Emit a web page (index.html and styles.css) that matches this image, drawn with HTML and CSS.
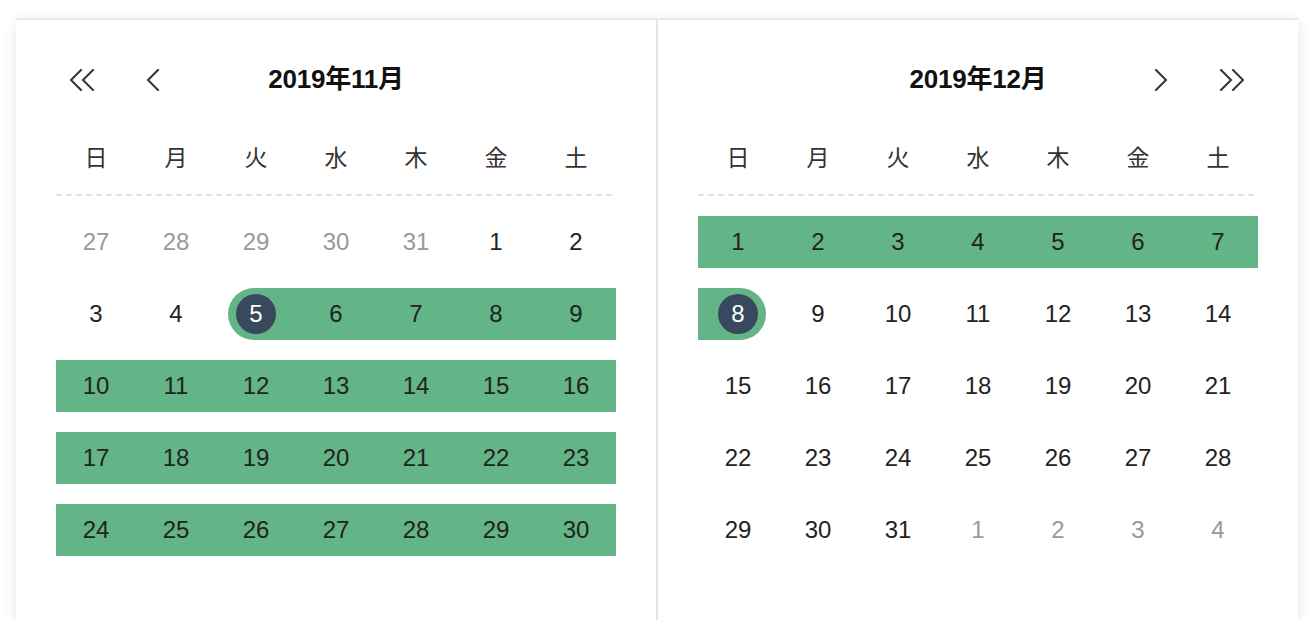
FILE: index.html
```html
<!DOCTYPE html>
<html lang="ja">
<head>
<meta charset="utf-8">
<title>Range Calendar</title>
<link rel="stylesheet" href="styles.css">
</head>
<body>
<div class="card">
  <section class="panel">
    <header class="head">
      <div class="nav nav-left">
        <button class="btn" aria-label="前年"><svg width="28" height="22" viewBox="0 0 28 22"><path d="M13 1 L3 11 L13 21 M25 1 L15 11 L25 21" /></svg></button>
        <button class="btn" aria-label="前月"><svg width="14" height="22" viewBox="0 0 14 22"><path d="M12 1 L2 11 L12 21" /></svg></button>
      </div>
      <h2 class="title">2019年11月</h2>
      <div class="nav nav-right"></div>
    </header>
    <div class="weekdays"><span>日</span><span>月</span><span>火</span><span>水</span><span>木</span><span>金</span><span>土</span></div>
    <div class="rule"></div>
    <div class="days">
      <span class="d muted">27</span><span class="d muted">28</span><span class="d muted">29</span><span class="d muted">30</span><span class="d muted">31</span><span class="d">1</span><span class="d">2</span>
      <span class="d">3</span><span class="d">4</span><span class="d start"><i>5</i></span><span class="d in">6</span><span class="d in">7</span><span class="d in">8</span><span class="d in">9</span>
      <span class="d in">10</span><span class="d in">11</span><span class="d in">12</span><span class="d in">13</span><span class="d in">14</span><span class="d in">15</span><span class="d in">16</span>
      <span class="d in">17</span><span class="d in">18</span><span class="d in">19</span><span class="d in">20</span><span class="d in">21</span><span class="d in">22</span><span class="d in">23</span>
      <span class="d in">24</span><span class="d in">25</span><span class="d in">26</span><span class="d in">27</span><span class="d in">28</span><span class="d in">29</span><span class="d in">30</span>
    </div>
  </section>
  <section class="panel">
    <header class="head">
      <div class="nav nav-left"></div>
      <h2 class="title">2019年12月</h2>
      <div class="nav nav-right">
        <button class="btn" aria-label="翌月"><svg width="14" height="22" viewBox="0 0 14 22"><path d="M2 1 L12 11 L2 21" /></svg></button>
        <button class="btn" aria-label="翌年"><svg width="28" height="22" viewBox="0 0 28 22"><path d="M3 1 L13 11 L3 21 M15 1 L25 11 L15 21" /></svg></button>
      </div>
    </header>
    <div class="weekdays"><span>日</span><span>月</span><span>火</span><span>水</span><span>木</span><span>金</span><span>土</span></div>
    <div class="rule"></div>
    <div class="days">
      <span class="d in">1</span><span class="d in">2</span><span class="d in">3</span><span class="d in">4</span><span class="d in">5</span><span class="d in">6</span><span class="d in">7</span>
      <span class="d end"><i>8</i></span><span class="d">9</span><span class="d">10</span><span class="d">11</span><span class="d">12</span><span class="d">13</span><span class="d">14</span>
      <span class="d">15</span><span class="d">16</span><span class="d">17</span><span class="d">18</span><span class="d">19</span><span class="d">20</span><span class="d">21</span>
      <span class="d">22</span><span class="d">23</span><span class="d">24</span><span class="d">25</span><span class="d">26</span><span class="d">27</span><span class="d">28</span>
      <span class="d">29</span><span class="d">30</span><span class="d">31</span><span class="d muted">1</span><span class="d muted">2</span><span class="d muted">3</span><span class="d muted">4</span>
    </div>
  </section>
</div>
</body>
</html>
```

FILE: styles.css
```css
* { box-sizing: border-box; }

html, body {
  margin: 0;
  padding: 0;
  background: #ffffff;
}

body {
  font-family: "Liberation Sans", "Noto Sans CJK JP", sans-serif;
  color: #222222;
}

.card {
  width: 1282px;
  margin: 18px 0 0 16px;
  display: grid;
  grid-template-columns: 640px 642px;
  background: #ffffff;
  border-top: 2px solid #e9e9e9;
  box-shadow: 0 4px 14px rgba(0, 0, 0, 0.10);
}

.panel {
  padding: 36px 40px 64px;
}

.panel + .panel {
  border-left: 2px solid #e4e4e4;
}

.head {
  height: 48px;
  display: grid;
  grid-template-columns: 1fr auto 1fr;
  align-items: center;
}

.title {
  margin: 0 0 3px;
  line-height: 1;
  font-size: 26px;
  font-weight: 700;
  color: #111111;
  font-family: "Liberation Sans", "Noto Sans CJK JP", sans-serif;
  letter-spacing: -0.2px;
}

.nav {
  display: flex;
  align-items: center;
  gap: 50px;
}

.nav-left {
  justify-content: flex-start;
  padding-left: 12px;
}

.nav-right {
  justify-content: flex-end;
  padding-right: 12px;
}

.btn {
  border: 0;
  padding: 0;
  background: none;
  display: flex;
  align-items: center;
  cursor: pointer;
}

.btn svg path {
  fill: none;
  stroke: #333333;
  stroke-width: 2;
  stroke-linecap: square;
  stroke-linejoin: miter;
}

.weekdays {
  margin-top: 28px;
  height: 52px;
  padding-bottom: 4px;
  display: grid;
  grid-template-columns: repeat(7, 80px);
  align-items: center;
  justify-items: center;
  font-family: "Noto Sans CJK JP", sans-serif;
  font-size: 23px;
  line-height: 1;
  color: #333333;
}

.rule {
  margin-top: 10px;
  height: 2px;
  background: repeating-linear-gradient(to right, #e2e2e2 0 6px, transparent 6px 10px);
}

.days {
  margin-top: 20px;
  display: grid;
  grid-template-columns: repeat(7, 80px);
  grid-auto-rows: 52px;
  row-gap: 20px;
}

.d {
  position: relative;
  display: flex;
  align-items: center;
  justify-content: center;
  font-size: 24px;
  color: #222222;
}

.d.muted {
  color: #999999;
}

.d.in {
  background: #63b587;
}

.d.start::before,
.d.end::before {
  content: "";
  position: absolute;
  top: 0;
  bottom: 0;
  background: #63b587;
}

.d.start::before {
  left: 12px;
  right: 0;
  border-radius: 26px 0 0 26px;
}

.d.end::before {
  left: 0;
  right: 12px;
  border-radius: 0 26px 26px 0;
}

.d i {
  position: relative;
  font-style: normal;
  width: 40px;
  height: 40px;
  border-radius: 50%;
  background: #38495e;
  color: #ffffff;
  display: flex;
  align-items: center;
  justify-content: center;
}
```
